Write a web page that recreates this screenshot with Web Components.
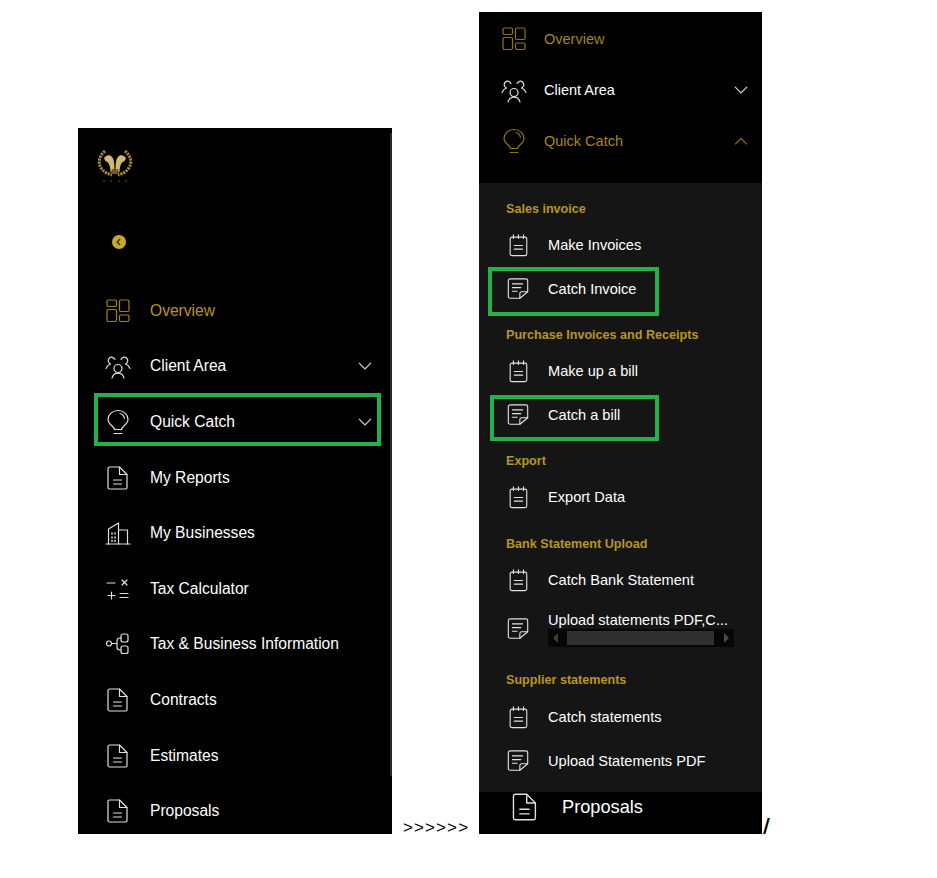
<!DOCTYPE html>
<html>
<head>
<meta charset="utf-8">
<title>Quick Catch menu</title>
<style>
  html, body { margin: 0; background: #fff; }
  body { font-family: "Liberation Sans", Arial, sans-serif; }
  #page {
    display: flex;
    align-items: flex-end;
    height: 834px;
    padding: 0 0 0 78px;
    color: #000;
  }
  .sep { width: 87px; padding-left: 11px; box-sizing: border-box; font-size: 17px; line-height: 12px; letter-spacing: 1.1px; }
  .slash { font-size: 28px; line-height: 11px; }
</style>
</head>
<body>
<div id="page">
  <side-menu></side-menu>
  <span class="sep">&gt;&gt;&gt;&gt;&gt;&gt;</span>
  <expanded-menu></expanded-menu>
  <span class="slash">/</span>
</div>

<script>
const ICONS = {
  overview: '<rect x="2" y="2" width="9.500" height="6.500" rx="1.500"/><rect x="14.500" y="2" width="9.500" height="11.500" rx="1.500"/><rect x="2" y="11.500" width="9.500" height="12" rx="1.500"/><rect x="14.500" y="17" width="9.500" height="6.500" rx="1.500"/>',
  client: '<circle cx="13" cy="15.500" r="4"/><path d="M7 25c1-3.500 3-4.800 6-4.800s5 1.300 6 4.800"/><path d="M10 6.500A3.500 3.500 0 1 0 5.500 11C3.500 11.700 2 13 1 15.500"/><path d="M16 6.500A3.500 3.500 0 1 1 20.500 11c2 .7 3.500 2 4.500 4.500"/>',
  bulb: '<path d="M9.500 20.500c0-3-6.500-5-6.500-10a10 9 0 0 1 20 0c0 5-6.500 7-6.500 10Z"/><path d="M15 4.500c2.500.6 4 2.300 4.300 4.800"/><path d="M9 24.500h8"/>',
  doc: '<path d="M4.500 2h10L22 9.500v13a1.500 1.500 0 0 1-1.500 1.500h-16A1.500 1.500 0 0 1 3 22.500v-19A1.500 1.500 0 0 1 4.500 2Z"/><path d="M14.500 2v7.500H22"/><path d="M8.500 15h8M8.500 19h8"/>',
  building: '<path d="M1 24h24"/><path d="M3.500 24V9L13.500 3v21"/><path d="M13.500 10h9v14"/><path d="M7 13v1M10 13v1M7 17v1M10 17v1M7 20.500v1M10 20.500v1" stroke-width="1.500"/>',
  calc: '<path d="M2 7h8M17 4l5 5M22 4l-5 5M3 19.500h7M6.500 16v7M15 17.500h8M15 21.500h8"/>',
  tree: '<circle cx="4" cy="12.500" r="2.500"/><rect x="16" y="3" width="7" height="8" rx="2"/><rect x="16" y="15" width="7" height="7.500" rx="2"/><path d="M6.500 12.500h5.500M16 7h-1a3 3 0 0 0-3 3v6a3 3 0 0 0 3 3h1"/>',
  pad: '<rect x="4.500" y="4.500" width="18" height="20" rx="2"/><path d="M8 2v4M13.500 2v4M19 2v4"/><path d="M9 13.500h9M9 17.500h9"/>',
  note: '<path d="M15 23H4.500a2 2 0 0 1-2-2V4a2 2 0 0 1 2-2h17a2 2 0 0 1 2 2v12Z"/><path d="M15 23v-5a2 2 0 0 1 2-2h6.500"/><path d="M7 7.500h11M7 11.500h9M7 15.500h5"/>',
};

class MenuIcon extends HTMLElement {
  connectedCallback() {
    const name = this.getAttribute('name');
    const size = this.getAttribute('size') || 26;
    if (!this.shadowRoot) this.attachShadow({ mode: 'open' });
    this.shadowRoot.innerHTML = `
      <style>
        :host { display: inline-flex; flex: none; opacity: .88; }
        svg { display: block; fill: none; stroke: currentColor; stroke-width: 1.200; stroke-linecap: round; stroke-linejoin: round; }
      </style>
      <svg width="${size}" height="${size}" viewBox="0 0 26 26">${ICONS[name]}</svg>`;
  }
}
customElements.define('menu-icon', MenuIcon);

// one row of a menu; the attributes set the look, the label goes in the slot
class MenuRow extends HTMLElement {
  connectedCallback() {
    const icon = this.getAttribute('icon');
    const arrow = this.getAttribute('arrow');
    const isize = this.getAttribute('isize') || 26;
    const chevron = arrow
      ? `<svg class="chev" width="14" height="8" viewBox="0 0 14 8"><path d="${arrow === 'up' ? 'M1 7.300 7 1.300l6 6' : 'M1 .8l6 6 6-6'}"/></svg>`
      : '';
    this.attachShadow({ mode: 'open' }).innerHTML = `
      <style>
        :host {
          display: flex;
          align-items: center;
          position: relative;
          height: var(--row-h, 55.6px);
          padding: var(--row-pad, 0 20px 0 27px);
          font-size: var(--row-font, 15.6px);
          color: #fff;
          white-space: nowrap;
        }
        :host([active]) { color: var(--gold, #b8961c); }
        .label { margin-left: var(--row-gap, 19px); flex: 1; min-width: 0; }
        .chev { display: block; fill: none; stroke: currentColor; stroke-width: 1.200; opacity: .85; flex: none; }
      </style>
      <menu-icon name="${icon}" size="${isize}"></menu-icon>
      <span class="label"><slot></slot></span>
      ${chevron}`;
  }
}
customElements.define('menu-row', MenuRow);

// green rectangle drawn around part of the screenshot
class MarkBox extends HTMLElement {
  constructor() {
    super();
    this.attachShadow({ mode: 'open' }).innerHTML = `
      <style>
        :host {
          position: absolute;
          box-sizing: border-box;
          border: 4px solid #22b14c;
          left: var(--l); top: var(--t); width: var(--w); height: var(--h);
          pointer-events: none;
        }
      </style>`;
  }
}
customElements.define('mark-box', MarkBox);

class SideMenu extends HTMLElement {
  constructor() {
    super();
    this.attachShadow({ mode: 'open' }).innerHTML = `
      <style>
        :host {
          display: block;
          flex: none;
          position: relative;
          width: 314px;
          height: 706px;
          background: #000;
          overflow: hidden;
        }
        .brand { height: 155px; display: flex; flex-direction: column; padding: 22px 0 0 19px; box-sizing: border-box; }
        .logo { display: block; }
        .back {
          width: 14px; height: 14px; border-radius: 50%;
          background: #c9a92c;
          margin: 49px 0 0 15px;
          display: flex; align-items: center; justify-content: center;
        }
        .back svg { display: block; fill: none; stroke: #3a2f08; stroke-width: 1.500; }
        .track { position: absolute; right: 0; top: 5px; width: 2px; height: 643px; background: #2a2a2a; }
      </style>
      <div class="brand">
        <svg class="logo" width="36" height="36" viewBox="0 0 36 36">
          <g fill="none" stroke="#a88a3c" stroke-width="3" stroke-dasharray="2.200 .9">
            <path d="M8 1C-1 8 0 21 15 25"/><path d="M28 1c9 7 8 20-7 24"/>
          </g>
          <path d="M7 8c2-3 6-4 8-1 2 2 2.500 6 2.500 15h-4c0-4-1-8-3-10-1 0-2.500-1-3.500-4Z" fill="#d4b773"/>
          <path d="M29 8c-2-3-6-4-8-1-2 2-2.500 6-2.500 15h4c0-4 1-8 3-10 1 0 2.500-1 3.500-4Z" fill="#d4b773"/>
          <path d="M15 19h6l1.500 5h-9Z" fill="#6f5c2a"/>
          <g fill="#8a7236"><circle cx="7" cy="31" r=".7"/><circle cx="14" cy="31" r=".7"/><circle cx="22" cy="31" r=".7"/><circle cx="29" cy="31" r=".7"/></g>
        </svg>
        <div class="back"><svg width="8" height="8" viewBox="0 0 8 8"><path d="M5 1 2.200 4 5 7"/></svg></div>
      </div>
      <menu-row icon="overview" active>Overview</menu-row>
      <menu-row icon="client" arrow="down">Client Area</menu-row>
      <menu-row icon="bulb" arrow="down">Quick Catch</menu-row>
      <menu-row icon="doc">My Reports</menu-row>
      <menu-row icon="building">My Businesses</menu-row>
      <menu-row icon="calc">Tax Calculator</menu-row>
      <menu-row icon="tree">Tax &amp; Business Information</menu-row>
      <menu-row icon="doc">Contracts</menu-row>
      <menu-row icon="doc">Estimates</menu-row>
      <menu-row icon="doc">Proposals</menu-row>
      <div class="track"></div>
      <mark-box style="--l:16px;--t:265px;--w:287px;--h:53px"></mark-box>`;
  }
}
customElements.define('side-menu', SideMenu);

class SubHeading extends HTMLElement {
  constructor() {
    super();
    this.attachShadow({ mode: 'open' }).innerHTML = `
      <style>
        :host {
          display: block;
          padding-left: 27px;
          font-size: 12.6px;
          font-weight: 700;
          line-height: 14px;
          color: #b8961c;
        }
      </style><slot></slot>`;
  }
}
customElements.define('sub-heading', SubHeading);

class ExpandedMenu extends HTMLElement {
  constructor() {
    super();
    this.attachShadow({ mode: 'open' }).innerHTML = `
      <style>
        :host {
          display: block;
          flex: none;
          position: relative;
          width: 283px;
          height: 822px;
          background: #000;
          overflow: hidden;
        }
        .top { height: 171px; --gold: #a38712; --row-h: 51.300px; --row-font: 14.5px; --row-pad: 0 14px 0 22px; --row-gap: 17px; padding-top: 1px; box-sizing: border-box; }
        .sub { height: 609px; background: #151515; box-sizing: border-box; padding-top: 19px; --row-h: 44px; --row-font: 14.6px; --row-pad: 0 28px 0 27px; --row-gap: 18px; }
        sub-heading { margin-bottom: 7px; }
        .tail { height: 42px; --row-h: 30px; --row-font: 18.2px; --row-pad: 0 0 0 31px; --row-gap: 22px; }
        .clip { display: block; white-space: nowrap; width: 186px; line-height: 17px; padding-top: 1px; }
        .bar { display: flex; width: 186px; height: 18px; background: #060606; align-items: center; justify-content: space-between; box-sizing: border-box; position: relative; }
        .thumb { position: absolute; left: 19px; right: 20px; top: 2px; bottom: 2px; background: #303030; }
        .arrow { width: 0; height: 0; border: 5px solid transparent; }
        .arrow.l { border-right-color: #3c3c3c; border-left-width: 0; margin-left: 5px; }
        .arrow.r { border-left-color: #4a4a4a; border-right-width: 0; margin-right: 5px; }
      </style>
      <div class="top">
        <menu-row icon="overview" active>Overview</menu-row>
        <menu-row icon="client" arrow="down">Client Area</menu-row>
        <menu-row icon="bulb" arrow="up" active>Quick Catch</menu-row>
      </div>
      <div class="sub">
        <sub-heading>Sales invoice</sub-heading>
        <menu-row icon="pad" isize="24">Make Invoices</menu-row>
        <menu-row icon="note" isize="24">Catch Invoice</menu-row>
        <sub-heading style="margin-top:17px">Purchase Invoices and Receipts</sub-heading>
        <menu-row icon="pad" isize="24">Make up a bill</menu-row>
        <menu-row icon="note" isize="24">Catch a bill</menu-row>
        <sub-heading style="margin-top:17px">Export</sub-heading>
        <menu-row icon="pad" isize="24">Export Data</menu-row>
        <sub-heading style="margin-top:18px">Bank Statement Upload</sub-heading>
        <menu-row icon="pad" isize="24">Catch Bank Statement</menu-row>
        <menu-row icon="note" isize="24" style="margin-top:5px">
          <span class="clip">Upload statements PDF,C...</span>
          <div class="bar"><span class="arrow l"></span><span class="thumb"></span><span class="arrow r"></span></div>
        </menu-row>
        <sub-heading style="margin-top:22px;margin-bottom:8px">Supplier statements</sub-heading>
        <menu-row icon="pad" isize="24">Catch statements</menu-row>
        <menu-row icon="note" isize="24">Upload Statements PDF</menu-row>
      </div>
      <div class="tail"><menu-row icon="doc" isize="30">Proposals</menu-row></div>
      <mark-box style="--l:9px;--t:255px;--w:171px;--h:49px"></mark-box>
      <mark-box style="--l:11px;--t:383px;--w:169px;--h:46px"></mark-box>`;
  }
}
customElements.define('expanded-menu', ExpandedMenu);
</script>
</body>
</html>
